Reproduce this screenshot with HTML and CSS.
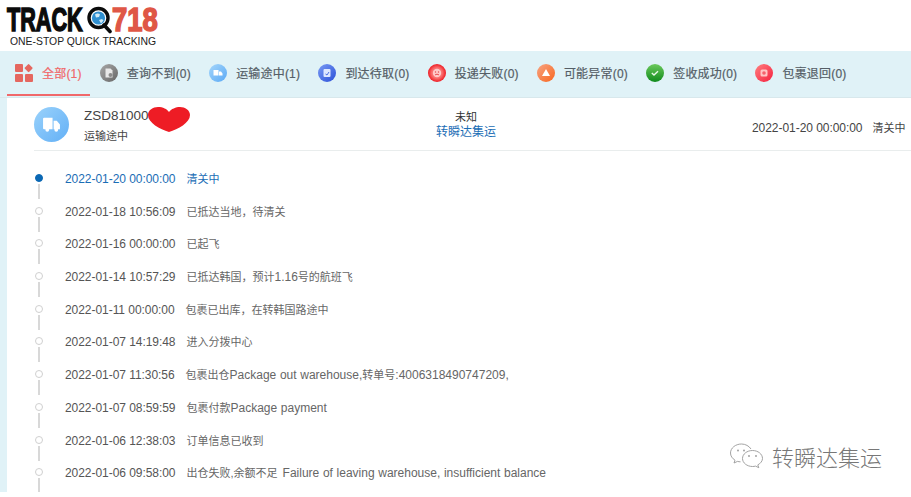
FILE: index.html
```html
<!DOCTYPE html>
<html lang="zh-CN">
<head>
<meta charset="utf-8">
<title>TrackQ718</title>
<link rel="stylesheet" href="styles.css">
</head>
<body>
<div class="page">
  <header class="logo">
    <div class="logo-word">
      <span class="logo-track">TRACK</span>
      <svg class="logo-q" viewBox="0 0 26 28" width="26" height="28" aria-hidden="true">
        <circle cx="11.5" cy="12" r="9.5" fill="#fff" stroke="#0b0b0b" stroke-width="3.4"/>
        <path d="M17 19l6 6.500" stroke="#0b0b0b" stroke-width="3.600" stroke-linecap="round"/>
        <circle cx="11.500" cy="12" r="6.600" fill="#2f8fd0"/>
        <path d="M8 8.500c2-1.500 4-1 5 0l-1 2.500-3 .5zM12 14l3-1 1.500 1.500-2.500 3z" fill="#cfe9f5"/>
      </svg>
      <span class="logo-num">718</span>
    </div>
    <div class="logo-tag">ONE-STOP QUICK TRACKING</div>
  </header>

  <nav class="tabs">
    <a class="tab tab-active">
      <svg class="tab-icon" viewBox="0 0 18 18" aria-hidden="true">
        <rect x="0" y="0" width="8" height="8" rx="1" fill="#e5675f"/>
        <rect x="10.500" y="1" width="6.200" height="6.200" rx="1" transform="rotate(45 13.600 4.100)" fill="#e5675f"/>
        <rect x="0" y="10" width="8" height="8" rx="1" fill="#e5675f"/>
        <rect x="10" y="10" width="8" height="8" rx="1" fill="#e5675f"/>
      </svg>
      <span>全部(1)</span>
    </a>
    <a class="tab">
      <svg class="tab-icon" viewBox="0 0 18 18" aria-hidden="true">
        <defs><linearGradient id="g1" x1="0" y1="0" x2="1" y2="1"><stop offset="0" stop-color="#a8a8a8"/><stop offset="1" stop-color="#666"/></linearGradient></defs>
        <circle cx="9" cy="9" r="9" fill="url(#g1)"/>
        <path d="M5.500 4.500h5l2 2v7h-7z" fill="#e8e8e8"/>
        <circle cx="10.500" cy="11" r="2" fill="#8a8a8a"/>
      </svg>
      <span>查询不到(0)</span>
    </a>
    <a class="tab">
      <svg class="tab-icon" viewBox="0 0 18 18" aria-hidden="true">
        <defs><linearGradient id="g2" x1="0" y1="0" x2="1" y2="1"><stop offset="0" stop-color="#a5d6fb"/><stop offset="1" stop-color="#5aa9f5"/></linearGradient></defs>
        <circle cx="9" cy="9" r="9" fill="url(#g2)"/>
        <path d="M4.500 6h5v5.500h-5zM10 7.500h2l1.500 2v2H10z" fill="#fff"/>
      </svg>
      <span>运输途中(1)</span>
    </a>
    <a class="tab">
      <svg class="tab-icon" viewBox="0 0 18 18" aria-hidden="true">
        <defs><linearGradient id="g3" x1="0" y1="0" x2="1" y2="1"><stop offset="0" stop-color="#7a9bf4"/><stop offset="1" stop-color="#2b50d8"/></linearGradient></defs>
        <circle cx="9" cy="9" r="9" fill="url(#g3)"/>
        <rect x="5.500" y="5" width="7" height="8" rx="1" fill="#dfe8ff"/>
        <path d="M7.500 10l1.500 1 2-3" stroke="#4a6ee0" fill="none"/>
      </svg>
      <span>到达待取(0)</span>
    </a>
    <a class="tab">
      <svg class="tab-icon" viewBox="0 0 18 18" aria-hidden="true">
        <defs><radialGradient id="g4"><stop offset="0" stop-color="#ffa0a0"/><stop offset=".6" stop-color="#f96a6a"/><stop offset="1" stop-color="#ee1c24"/></radialGradient></defs>
        <circle cx="9" cy="9" r="9" fill="url(#g4)"/>
        <circle cx="9" cy="9" r="4.200" fill="#ffc9c9"/>
        <path d="M7 11c1-1 3-1 4 0" stroke="#e8494e" fill="none"/>
        <circle cx="7.500" cy="8" r=".7" fill="#e8494e"/><circle cx="10.500" cy="8" r=".7" fill="#e8494e"/>
      </svg>
      <span>投递失败(0)</span>
    </a>
    <a class="tab">
      <svg class="tab-icon" viewBox="0 0 18 18" aria-hidden="true">
        <defs><linearGradient id="g5" x1="0" y1="0" x2="1" y2="1"><stop offset="0" stop-color="#f6a483"/><stop offset="1" stop-color="#f9661e"/></linearGradient></defs>
        <circle cx="9" cy="9" r="9" fill="url(#g5)"/>
        <path d="M9 5l4 7H5z" fill="#fff"/>
      </svg>
      <span>可能异常(0)</span>
    </a>
    <a class="tab">
      <svg class="tab-icon" viewBox="0 0 18 18" aria-hidden="true">
        <defs><linearGradient id="g6" x1="0" y1="0" x2="0" y2="1"><stop offset="0" stop-color="#6cc95c"/><stop offset="1" stop-color="#0f8a1c"/></linearGradient></defs>
        <circle cx="9" cy="9" r="9" fill="url(#g6)"/>
        <path d="M5.800 9l2.200 2 4-3.800" stroke="#e8f8e8" stroke-width="1.400" fill="none"/>
      </svg>
      <span>签收成功(0)</span>
    </a>
    <a class="tab">
      <svg class="tab-icon" viewBox="0 0 18 18" aria-hidden="true">
        <defs><linearGradient id="g7" x1="0" y1="0" x2="1" y2="1"><stop offset="0" stop-color="#ff7f7f"/><stop offset="1" stop-color="#f5203f"/></linearGradient></defs>
        <circle cx="9" cy="9" r="9" fill="url(#g7)"/>
        <rect x="5.500" y="5.500" width="7" height="7" rx="1.500" fill="#ffc4c4"/>
        <circle cx="9" cy="9" r="1.800" fill="#f5606c"/>
      </svg>
      <span>包裹退回(0)</span>
    </a>
  </nav>

  <main class="panel">
    <section class="summary">
      <div class="avatar">
        <svg viewBox="0 0 18 14" width="19" height="15" aria-hidden="true">
          <path d="M1 1.500A1 1 0 0 1 2 .5h8v11H2a1 1 0 0 1-1-1zM11 3.500h3l3 3.500v4.500h-6z" fill="#fff"/>
          <circle cx="5" cy="12" r="1.800" fill="#fff"/><circle cx="13.500" cy="12" r="1.800" fill="#fff"/>
        </svg>
      </div>
      <div class="parcel">
        <div class="parcel-no">ZSD810009
          <svg class="heart" viewBox="0 0 42 25" width="42" height="25" aria-hidden="true">
            <path d="M21 25C12 22 0 16 0 8 0 3 5 0 10 0c5 0 9 2 11 5 2-3 7-5 11-5 5 0 10 3 10 8 0 8-12 14-21 17z" fill="#ee1c25"/>
          </svg>
        </div>
        <div class="parcel-status">运输途中</div>
      </div>
      <div class="carrier">
        <div class="carrier-name">未知</div>
        <a class="carrier-link">转瞬达集运</a>
      </div>
      <div class="latest">
        <span class="stamp">2022-01-20 00:00:00</span>
        <span class="zh">清关中</span>
      </div>
    </section>

    <ol class="timeline">
      <li class="event event-now"><i class="dot"></i><time class="stamp">2022-01-20 00:00:00</time><span class="zh">清关中</span></li>
      <li class="event"><i class="dot"></i><time class="stamp">2022-01-18 10:56:09</time><span class="zh">已抵达当地，待清关</span></li>
      <li class="event"><i class="dot"></i><time class="stamp">2022-01-16 00:00:00</time><span class="zh">已起飞</span></li>
      <li class="event"><i class="dot"></i><time class="stamp">2022-01-14 10:57:29</time><span class="zh">已抵达韩国，预计<span class="en">1.16</span>号的航班飞</span></li>
      <li class="event"><i class="dot"></i><time class="stamp">2022-01-11 00:00:00</time><span class="zh">包裹已出库，在转韩国路途中</span></li>
      <li class="event"><i class="dot"></i><time class="stamp">2022-01-07 14:19:48</time><span class="zh">进入分拨中心</span></li>
      <li class="event"><i class="dot"></i><time class="stamp">2022-01-07 11:30:56</time><span class="zh">包裹出仓<span class="en">Package out warehouse,</span>转单号<span class="en">:4006318490747209,</span></span></li>
      <li class="event"><i class="dot"></i><time class="stamp">2022-01-07 08:59:59</time><span class="zh">包裹付款<span class="en">Package payment</span></span></li>
      <li class="event"><i class="dot"></i><time class="stamp">2022-01-06 12:38:03</time><span class="zh">订单信息已收到</span></li>
      <li class="event"><i class="dot"></i><time class="stamp">2022-01-06 09:58:00</time><span class="zh">出仓失败,余额不足 <span class="en">Failure of leaving warehouse, insufficient balance</span></span></li>
    </ol>
  </main>

  <div class="watermark">
    <svg viewBox="0 0 36 26" width="36" height="26" aria-hidden="true">
      <path d="M22 6C20 3 16.500 1 12.500 1 6.500 1 1.500 5 1.500 10c0 3 1.800 5.500 4.500 7.200L5 20l3.500-1.600c1 .3 2 .4 3 .4" fill="none" stroke="#999" stroke-width=".9"/>
      <path d="M23.500 7.500c-5.500 0-10 3.600-10 8s4.500 8 10 8c1 0 2-.1 3-.4l3.300 1.600-1-2.800c2.600-1.400 4.700-3.800 4.700-6.400 0-4.400-4.500-8-10-8z" fill="#fff" stroke="#999" stroke-width=".9"/>
      <circle cx="9" cy="7.500" r=".9" fill="#999"/><circle cx="15" cy="7.500" r=".9" fill="#999"/>
      <circle cx="20" cy="13" r=".9" fill="#999"/><circle cx="27" cy="13" r=".9" fill="#999"/>
    </svg>
    <span>转瞬达集运</span>
  </div>
</div>
</body>
</html>
```

FILE: styles.css
```css
html, body {
  margin: 0;
  padding: 0;
  background: #fff;
}
.page {
  position: relative;
  width: 911px;
  height: 492px;
  overflow: hidden;
  background: #e0f2f7;
  font-family: "Liberation Sans", "Noto Sans CJK SC", sans-serif;
  font-size: 12px;
  color: #555;
}
.zh {
  font-size: 11px;
  word-spacing: 2px;
}
.en {
  font-size: 12px;
  word-spacing: .3px;
}
.stamp {
  letter-spacing: -.05px;
}

/* logo */
.logo {
  height: 51px;
  background: #fff;
  padding-left: 7px;
  overflow: hidden;
}
.logo-word {
  display: flex;
  align-items: flex-start;
  height: 34px;
  padding-top: 6px;
  box-sizing: border-box;
}
.logo-track, .logo-num {
  display: block;
  font-size: 33px;
  line-height: 28px;
  font-weight: 700;
  -webkit-text-stroke: 1.600px currentColor;
  transform-origin: 0 0;
}
.logo-track {
  width: 80px;
  color: #0b0b0b;
  transform: scaleX(.655);
}
.logo-num {
  width: 46px;
  color: #df5746;
  transform: scaleX(.83);
  margin-left: -1px;
}
.logo-q {
  flex: none;
}
.logo-tag {
  margin: 2px 0 0 3px;
  font-size: 10.400px;
  line-height: 12px;
  color: #222;
  white-space: nowrap;
}

/* tabs */
.tabs {
  display: flex;
  gap: 2.200px;
  height: 47px;
  padding-left: 7px;
  border-bottom: 1px solid #d8e8ec;
  box-sizing: border-box;
}
.tab {
  display: flex;
  align-items: center;
  gap: 9px;
  height: 45px;
  padding: 0 8px 2px;
  box-sizing: border-box;
  letter-spacing: .2px;
  -webkit-text-stroke: .2px currentColor;
  color: #555e66;
  white-space: nowrap;
}
.tab-icon {
  width: 18px;
  height: 18px;
  flex: none;
}
.tab-active {
  color: #f0686a;
  border-bottom: 2px solid #f0686a;
  padding-bottom: 0;
}

/* panel */
.panel {
  margin-left: 7px;
  height: 394px;
  background: #fff;
  overflow: hidden;
}
.summary {
  display: flex;
  align-items: flex-start;
  height: 53px;
  margin-left: 27px;
  border-bottom: 1px solid #e9eded;
  box-sizing: border-box;
}
.avatar {
  flex: none;
  display: flex;
  align-items: center;
  justify-content: center;
  width: 35px;
  height: 35px;
  margin-top: 9px;
  border-radius: 50%;
  background: linear-gradient(135deg, #9ad2fb, #63b0f6);
}
.parcel {
  width: 351px;
  margin-left: 15px;
  flex: none;
}
.parcel-no {
  position: relative;
  margin-top: 9px;
  font-size: 13.500px;
  line-height: 17px;
  color: #444;
}
.heart {
  position: absolute;
  left: 64px;
  top: 0;
}
.parcel-status {
  margin-top: 4px;
  font-size: 11px;
  line-height: 17px;
  color: #444;
}
.carrier {
  flex: none;
  width: 62px;
  margin-top: 12px;
  text-align: center;
  line-height: 15px;
  color: #333;
}
.carrier-name {
  font-size: 11px;
}
.carrier-link {
  color: #1a6db5;
  white-space: nowrap;
}
.latest {
  margin: 23px 0 0 255px;
  display: flex;
  align-items: baseline;
  gap: 10px;
  white-space: nowrap;
  line-height: 15px;
  color: #444;
}

/* timeline */
.timeline {
  list-style: none;
  margin: 12px 0 0;
  padding: 0 0 0 28px;
}
.event {
  position: relative;
  display: flex;
  align-items: baseline;
  gap: 11px;
  height: 32.700px;
  padding-left: 30px;
  line-height: 32.700px;
  white-space: nowrap;
  color: #666;
}
.event time {
  color: #555;
}
.dot {
  position: absolute;
  left: 0;
  top: 11px;
  width: 8px;
  height: 8px;
  border: 1px solid #d0d0d0;
  border-radius: 50%;
  box-sizing: border-box;
  background: #fff;
}
.dot::after {
  content: "";
  position: absolute;
  left: 2px;
  top: 9px;
  width: 2px;
  height: 15px;
  background: #d8d8d8;
}
.event-now, .event-now time {
  color: #1a6db5;
}
.event-now .dot {
  background: #0a68b4;
  border-color: #0a68b4;
}

/* watermark */
.watermark {
  position: absolute;
  left: 729px;
  top: 441px;
  display: flex;
  align-items: center;
  gap: 7px;
  font-family: "Noto Sans CJK SC", sans-serif;
  font-size: 22px;
  font-weight: 300;
  line-height: 30px;
  color: #777;
}
```
